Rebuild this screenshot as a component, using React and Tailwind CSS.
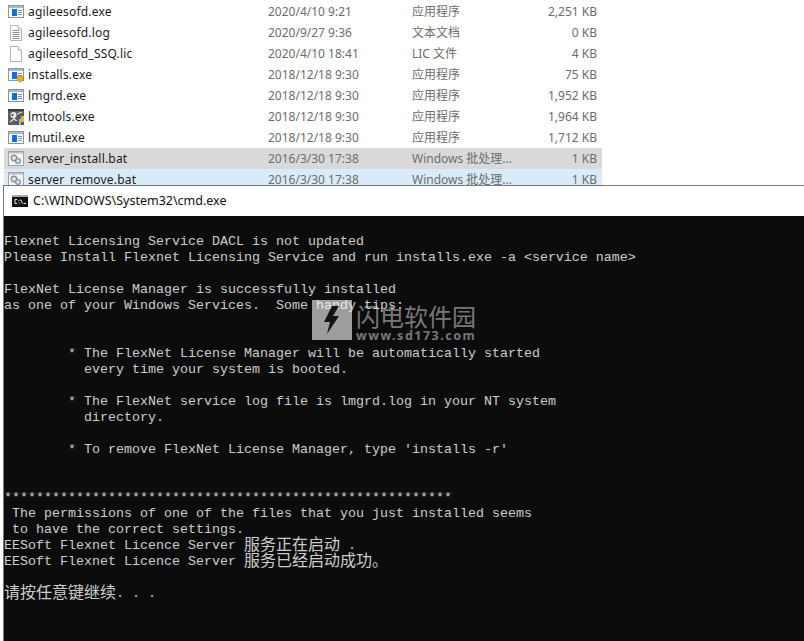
import React from "react";

const files = [
  { name: "agileesofd.exe", date: "2020/4/10 9:21", type: "应用程序", size: "2,251 KB", icon: "exe" },
  { name: "agileesofd.log", date: "2020/9/27 9:36", type: "文本文档", size: "0 KB", icon: "log" },
  { name: "agileesofd_SSQ.lic", date: "2020/4/10 18:41", type: "LIC 文件", size: "4 KB", icon: "blank" },
  { name: "installs.exe", date: "2018/12/18 9:30", type: "应用程序", size: "75 KB", icon: "shield" },
  { name: "lmgrd.exe", date: "2018/12/18 9:30", type: "应用程序", size: "1,952 KB", icon: "exe" },
  { name: "lmtools.exe", date: "2018/12/18 9:30", type: "应用程序", size: "1,964 KB", icon: "tools" },
  { name: "lmutil.exe", date: "2018/12/18 9:30", type: "应用程序", size: "1,712 KB", icon: "exe" },
  { name: "server_install.bat", date: "2016/3/30 17:38", type: "Windows 批处理...", size: "1 KB", icon: "bat", row: "bg-[#d9d9d9]" },
  { name: "server_remove.bat", date: "2016/3/30 17:38", type: "Windows 批处理...", size: "1 KB", icon: "bat", row: "bg-[#d9ebf8]" },
];

const consoleLines = [
  "",
  "Flexnet Licensing Service DACL is not updated",
  "Please Install Flexnet Licensing Service and run installs.exe -a <service name>",
  "",
  "FlexNet License Manager is successfully installed",
  "as one of your Windows Services.  Some handy tips:",
  "",
  "",
  "        * The FlexNet License Manager will be automatically started",
  "          every time your system is booted.",
  "",
  "        * The FlexNet service log file is lmgrd.log in your NT system",
  "          directory.",
  "",
  "        * To remove FlexNet License Manager, type 'installs -r'",
  "",
  "",
  "********************************************************",
  " The permissions of one of the files that you just installed seems",
  " to have the correct settings.",
];

const FileIcon = ({ kind }) => {
  if (kind === "log" || kind === "blank") {
    return (
      <svg width="16" height="16" viewBox="0 0 16 16">
        <path d="M2.5 .5H10L13.5 4V15.5H2.5Z" fill="#fff" stroke="#b4b4b4" />
        <path d="M10 .5V4H13.5" fill="#f0f0f0" stroke="#b4b4b4" />
        {kind === "log" && (
          <path d="M4.5 5.5H11.5M4.5 7.5H11.5M4.5 9.5H11.5M4.5 11.5H11.5M4.5 13.5H11.5" stroke="#8c8c8c" />
        )}
      </svg>
    );
  }
  if (kind === "tools") {
    return (
      <svg width="16" height="16" viewBox="0 0 16 16">
        <rect width="16" height="16" fill="#5c5c5c" />
        <rect width="16" height="2" fill="#3d3d3d" />
        <circle cx="5.5" cy="6" r="3" fill="#e8e8e8" />
        <circle cx="4.5" cy="6" r="1" fill="#333" />
        <path d="M7 9L2 13M9 5L14 3M6 10L10 13" stroke="#e0e0e0" strokeWidth="1.3" />
        <rect x="10" y="7" width="3" height="3" fill="#2f5fae" />
        <rect x="13" y="7" width="3" height="3" fill="#e2b530" />
        <rect x="7" y="12" width="4" height="4" fill="#2f5fae" />
        <rect x="11" y="10" width="5" height="6" fill="#e2b530" />
        <rect x="13" y="13" width="3" height="3" fill="#2f5fae" />
      </svg>
    );
  }
  if (kind === "bat") {
    return (
      <svg width="16" height="16" viewBox="0 0 16 16">
        <rect x=".5" y=".5" width="15" height="14" fill="#f4f4f4" stroke="#a4a4a4" />
        <rect x="1" y="1" width="14" height="1.5" fill="#bdbdbd" />
        <circle cx="6" cy="7" r="2.8" fill="#e2e2e2" stroke="#8c8c8c" strokeWidth="1.4" />
        <circle cx="10" cy="10" r="2.4" fill="#dbe6f2" stroke="#8497ad" strokeWidth="1.4" />
      </svg>
    );
  }
  return (
    <svg width="16" height="16" viewBox="0 0 16 16">
      <rect x=".5" y="1.5" width="15" height="12" fill="#fff" stroke="#8496ac" />
      <rect x="1" y="2" width="14" height="2" fill="#a9b9cc" />
      <rect x="4" y="5" width="5" height="7" fill="#0f6fd6" />
      <path d="M10 6.5H14M10 8.5H14M10 10.5H14" stroke="#8496ac" />
      {kind === "shield" && <path d="M9 9.5L12 8.5L15.5 9.5V12.5L12 15.5L9 12.5Z" fill="#e8b020" stroke="#a87a10" strokeWidth=".6" />}
    </svg>
  );
};

const Cjk = ({ children }) => (
  <span className="text-[16px] leading-4 -mt-[3px] font-['Noto_Sans_CJK_SC',sans-serif]">{children}</span>
);

const App = () => {
  return (
    <div className="w-[804px] h-[641px] overflow-hidden bg-white">
      {/* Explorer list, cut off by the console window */}
      <div className="h-[185px] overflow-hidden pt-px pl-1 font-['Noto_Sans','Noto_Sans_CJK_SC',sans-serif] text-xs">
        {files.map((f) => (
          <div key={f.name} className={`w-[598px] h-[21px] flex items-center ${f.row || ""}`}>
            <div className="w-6 pl-1 shrink-0">
              <FileIcon kind={f.icon} />
            </div>
            <div className="w-[240px] shrink-0 text-[#1c1c1c] tracking-[0.2px]">{f.name}</div>
            <div className="w-[144px] shrink-0 text-[#6d6d6d]">{f.date}</div>
            <div className="w-[110px] shrink-0 text-[#6d6d6d]">{f.type}</div>
            <div className="w-[75px] shrink-0 text-right text-[#6d6d6d]">{f.size}</div>
          </div>
        ))}
      </div>

      {/* cmd window */}
      <div className="relative ml-[3px] h-[456px] border-t border-l border-[#7a7a7a] bg-[#0c0c0c]">
        <div className="h-[30px] bg-white flex items-center pl-2 gap-[5px] font-['Noto_Sans',sans-serif] text-[#111]">
          <svg width="16" height="12" viewBox="0 0 16 12">
            <rect width="16" height="12" fill="#111" />
            <rect width="16" height="2" fill="#a8a8a8" />
            <path d="M5 4.5H3V8.5H5M7 5V6M7 7.5V8.5M8.5 4.5L10.5 8.5M11.5 8.5H14" stroke="#e8e8e8" fill="none" />
          </svg>
          <span className="text-[12.5px]">C:\WINDOWS\System32\cmd.exe</span>
        </div>
        <div className="pt-[2px] font-['Liberation_Mono','Noto_Sans_CJK_SC',monospace] text-[13.33px] leading-4 text-[#cccccc]">
          {consoleLines.map((line, i) => (
            <div key={i} className="h-4 whitespace-pre">{line}</div>
          ))}
          <div className="h-4 flex whitespace-pre">
            <span>EESoft Flexnet Licence Server </span>
            <Cjk>服务正在启动</Cjk>
            <span> .</span>
          </div>
          <div className="h-4 flex whitespace-pre">
            <span>EESoft Flexnet Licence Server </span>
            <Cjk>服务已经启动成功。</Cjk>
          </div>
          <div className="h-4" />
          <div className="h-4 flex whitespace-pre">
            <Cjk>请按任意键继续</Cjk>
            <span>. . .</span>
          </div>
        </div>

        {/* watermark sits over the console text */}
        <div className="absolute left-[308px] top-[114px] flex items-start gap-1">
          <div className="w-10 h-10 bg-white/60 flex items-center justify-center">
            <svg width="18" height="30" viewBox="0 0 18 30">
              <path d="M9 1L1 17H7L4 29L16 11H10L16 1Z" fill="#141414" />
            </svg>
          </div>
          <div className="text-white/45">
            <div className="font-['Noto_Sans_CJK_SC',sans-serif] text-[24px] leading-[25px] mt-[3px]">闪电软件园</div>
            <div className="font-['Noto_Sans',sans-serif] text-[12.5px] leading-4 font-bold tracking-[1.5px]">www.sd173.com</div>
          </div>
        </div>
      </div>
    </div>
  );
};

export default App;
